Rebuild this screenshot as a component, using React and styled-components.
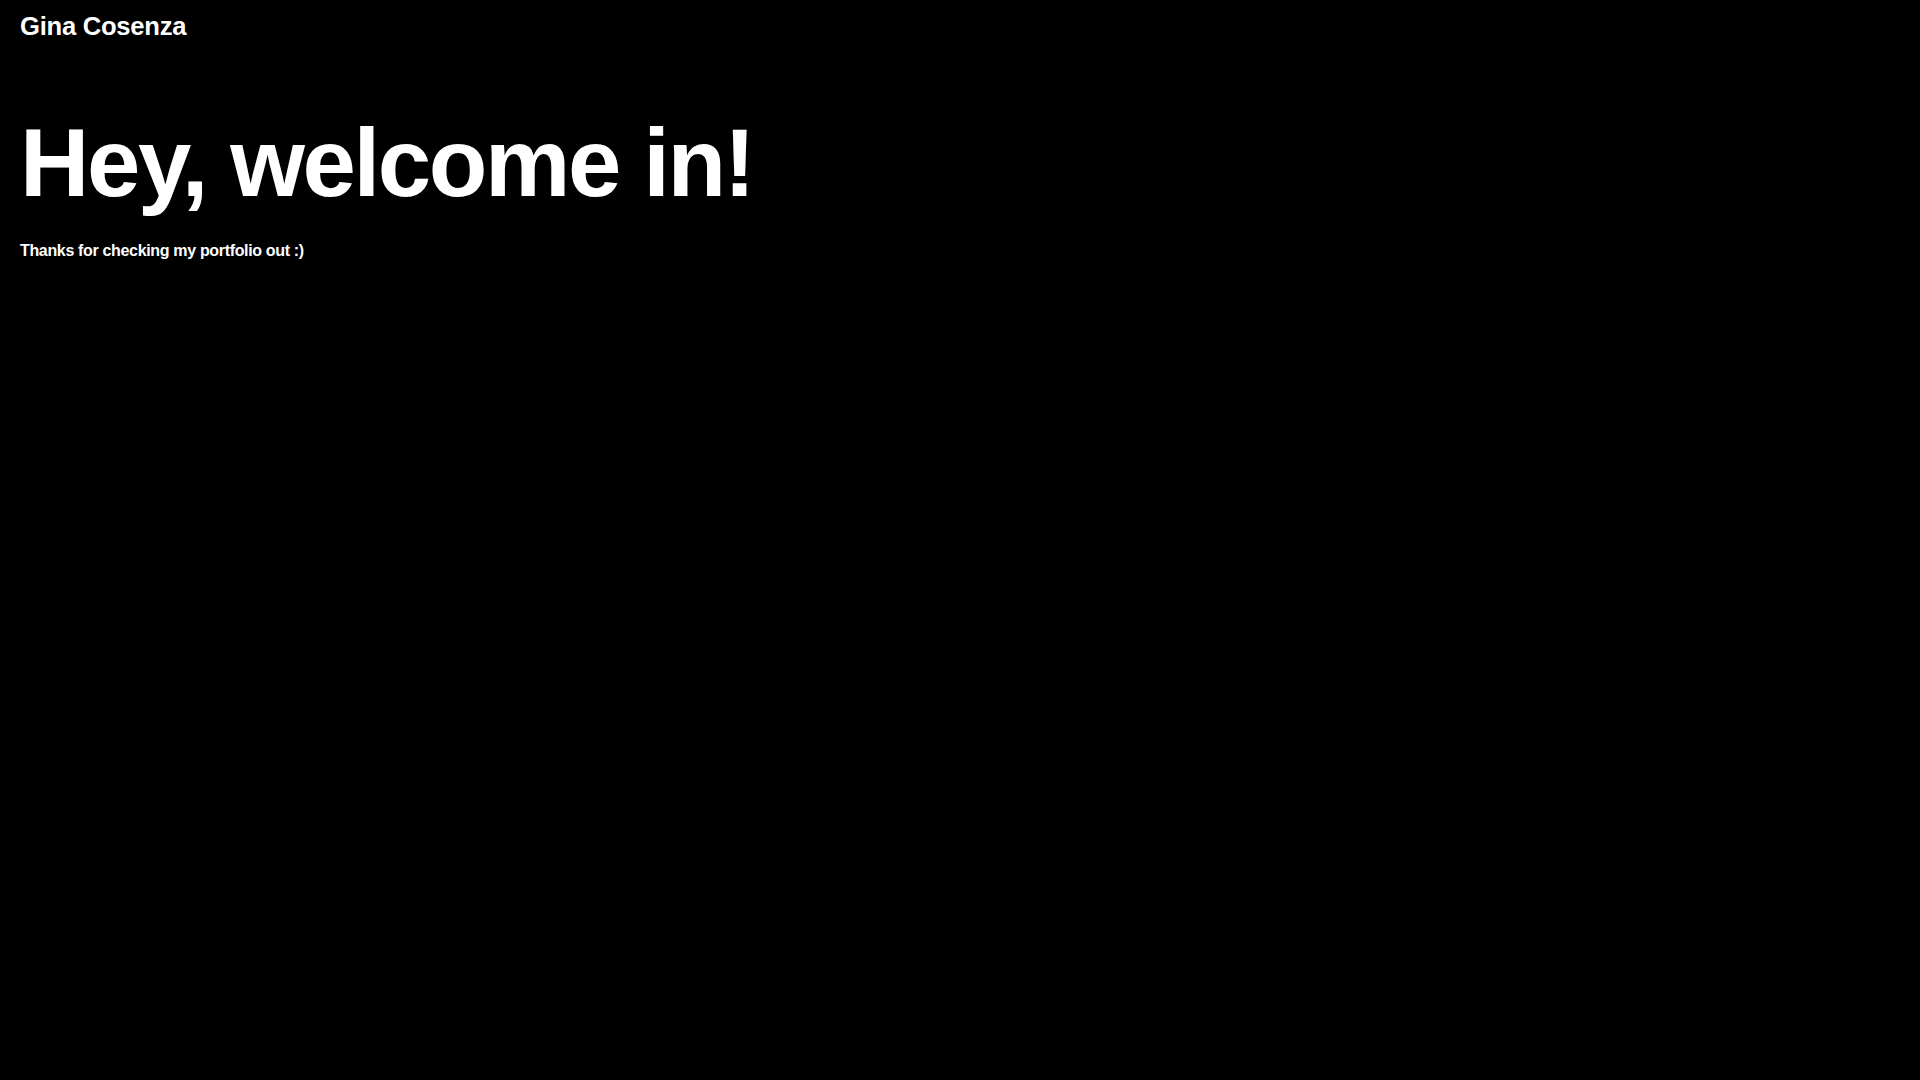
import React from "react";
import styled, { createGlobalStyle } from "styled-components";

const Global = createGlobalStyle`
  html, body {
    margin: 0;
    padding: 0;
    background: #000;
    color: #fff;
    font-family: "Liberation Sans", Arial, sans-serif;
  }
  * { box-sizing: border-box; }
`;

const Page = styled.div`
  min-height: 100vh;
  padding: 12px 20px;
  background: #000;
  display: flex;
  flex-direction: column;
`;

const Header = styled.header`
  display: flex;
  align-items: center;
`;

const Name = styled.div`
  font-size: 25.6px;
  font-weight: 700;
  letter-spacing: -0.01em;
  line-height: normal;
`;

const Hero = styled.section`
  display: flex;
  flex-direction: column;
  margin-top: 74px;
`;

const Title = styled.h1`
  margin: 0;
  font-size: 96px;
  font-weight: 700;
  line-height: 1;
  letter-spacing: -0.025em;
`;

const Tagline = styled.p`
  margin: 31px 0 0;
  font-size: 16px;
  font-weight: 700;
  line-height: normal;
  letter-spacing: -0.021em;
`;

export default function App() {
  return (
    <>
      <Global />
      <Page>
        <Header>
          <Name>Gina Cosenza</Name>
        </Header>
        <Hero>
          <Title>Hey, welcome in!</Title>
          <Tagline>Thanks for checking my portfolio out :)</Tagline>
        </Hero>
      </Page>
    </>
  );
}
